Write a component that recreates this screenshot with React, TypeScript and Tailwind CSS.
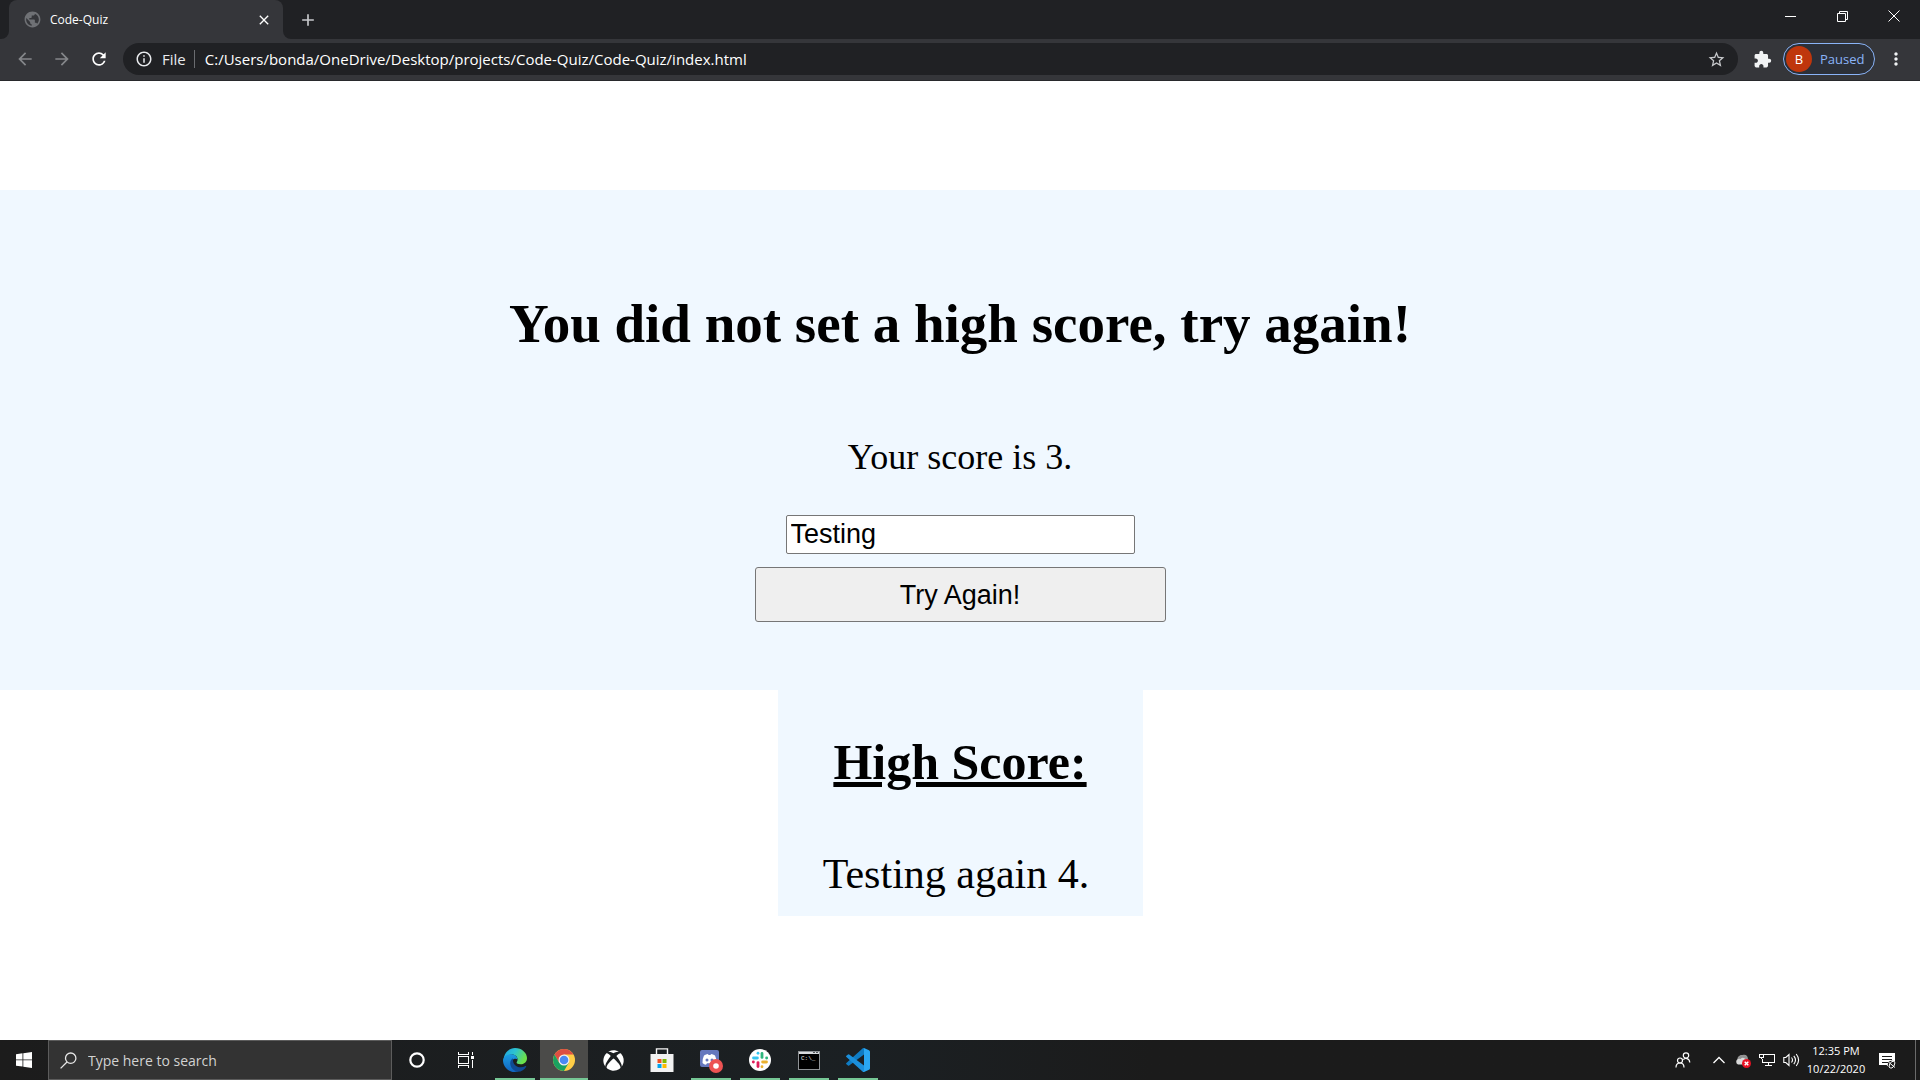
import { useState } from "react";
import type { ReactNode } from "react";
import {
  MdAdd,
  MdArrowBack,
  MdArrowForward,
  MdClose,
  MdExtension,
  MdMoreVert,
  MdOutlineInfo,
  MdPublic,
  MdRefresh,
  MdStarBorder,
} from "react-icons/md";
import { FaXbox } from "react-icons/fa";

function TabStrip() {
  return (
    <div className="flex h-[39px] bg-[#202124]">
      <div className="flex w-[9px] shrink-0 bg-[#35363a]">
        <div className="w-full rounded-br-lg bg-[#202124]" />
      </div>
      <div className="flex w-[274px] shrink-0 items-center rounded-t-lg bg-[#35363a] pl-[14px] pr-[11px]">
        <MdPublic className="size-[19px] text-[#6f7175]" />
        <span className="ml-2 flex-1 text-[12px] leading-4 text-white">Code-Quiz</span>
        <button type="button" aria-label="Close tab" className="text-white">
          <MdClose className="size-4" />
        </button>
      </div>
      <div className="flex min-w-0 flex-1 bg-[#35363a]">
        <div className="flex flex-1 items-center rounded-bl-lg bg-[#202124] pl-[15px]">
          <button type="button" aria-label="New tab" className="text-[#c6c8cb]">
            <MdAdd className="size-5" />
          </button>
        </div>
      </div>
      <div className="flex h-8 bg-[#202124] text-white">
        <button type="button" aria-label="Minimize" className="flex w-[52px] items-center justify-center">
          <svg width="11" height="11" viewBox="0 0 11 11" shapeRendering="crispEdges">
            <path d="M0 5h11" stroke="currentColor" />
          </svg>
        </button>
        <button type="button" aria-label="Restore" className="flex w-[52px] items-center justify-center">
          <svg width="11" height="11" viewBox="0 0 11 11" fill="none" stroke="currentColor">
            <path d="M.5 2.500h8v8h-8zM2.500 2.500v-2h8v8h-2" />
          </svg>
        </button>
        <button type="button" aria-label="Close" className="flex w-[52px] items-center justify-center">
          <svg width="12" height="12" viewBox="0 0 12 12" stroke="currentColor">
            <path d="M.5.5l11 11M11.500.5l-11 11" />
          </svg>
        </button>
      </div>
    </div>
  );
}

function Toolbar() {
  return (
    <div className="flex h-[42px] items-center border-b border-[#28292c] bg-[#35363a] pb-px">
      <div className="flex items-center gap-[17px] pl-[15px]">
        <button type="button" aria-label="Back" className="text-[#85878a]">
          <MdArrowBack className="size-5" />
        </button>
        <button type="button" aria-label="Forward" className="text-[#85878a]">
          <MdArrowForward className="size-5" />
        </button>
        <button type="button" aria-label="Reload" className="text-white">
          <MdRefresh className="size-5" />
        </button>
      </div>
      <div className="ml-[14px] flex h-8 min-w-0 flex-1 items-center rounded-full bg-[#202124] px-3">
        <MdOutlineInfo className="size-[18px] shrink-0 text-[#e8eaed]" />
        <span className="ml-[9px] text-[15px] leading-5 text-[#e8eaed]">File</span>
        <span className="ml-2 h-[18px] w-px bg-[#6a6c70]" />
        <input
          aria-label="Address"
          defaultValue="C:/Users/bonda/OneDrive/Desktop/projects/Code-Quiz/Code-Quiz/index.html"
          className="ml-[10px] min-w-0 flex-1 bg-transparent text-[15px] leading-5 text-white outline-none"
        />
        <button type="button" aria-label="Bookmark this tab" className="text-[#c6c8cb]">
          <MdStarBorder className="size-[19px]" />
        </button>
      </div>
      <button type="button" aria-label="Extensions" className="ml-[15px] text-[#f1f3f4]">
        <MdExtension className="size-[19px]" />
      </button>
      <button
        type="button"
        className="ml-[11px] flex h-8 w-[92px] items-center rounded-full border border-[#8ab4f8] bg-[#2c3038] pl-0.5"
      >
        <span className="flex size-[26px] items-center justify-center rounded-full bg-[#bf360c] text-[13px] leading-4 text-white">
          B
        </span>
        <span className="ml-2 text-[13px] leading-5 text-[#8ab4f8]">Paused</span>
      </button>
      <button type="button" aria-label="Menu" className="ml-[11px] mr-[14px] text-[#f1f3f4]">
        <MdMoreVert className="size-5" />
      </button>
    </div>
  );
}

function QuizPage() {
  const [name, setName] = useState("Testing");
  return (
    <main className="flex flex-1 flex-col items-center bg-white pt-[109px] font-['Liberation_Serif',serif] text-black">
      <section className="flex h-[500px] w-full flex-col items-center bg-[#f0f8ff] pt-[103px]">
        <h1 className="text-[55px] font-bold leading-[62px]">You did not set a high score, try again!</h1>
        <p className="mt-[81px] text-[36px] leading-[42px]">Your score is 3.</p>
        <input
          aria-label="Your name"
          value={name}
          onChange={(e) => setName(e.target.value)}
          className="mt-[37px] h-[39px] w-[349px] rounded-xs border border-[#767676] bg-white px-1 font-['Liberation_Sans',Arial,sans-serif] text-[27px] leading-8 outline-none"
        />
        <button
          type="button"
          className="mt-[13px] h-[55px] w-[411px] rounded-[3px] border border-[#767676] bg-[#efefef] font-['Liberation_Sans',Arial,sans-serif] text-[27px] leading-8"
        >
          Try Again!
        </button>
      </section>
      <section className="flex w-[365px] flex-col items-center bg-[#f0f8ff] pb-[17px] pt-[43px]">
        <h2 className="text-[50px] font-bold leading-[58px] underline decoration-[5px]">High Score:</h2>
        <p className="mr-2 mt-[58px] text-[42px] leading-[50px]">Testing again 4.</p>
      </section>
    </main>
  );
}

function EdgeIcon() {
  return (
    <svg width="24" height="24" viewBox="0 0 24 24">
      <defs>
        <linearGradient id="edgeTop" x1="0" y1="0" x2="1" y2="0.4">
          <stop offset="0" stopColor="#1f9fe0" />
          <stop offset="0.5" stopColor="#2cc3d2" />
          <stop offset="1" stopColor="#6be04a" />
        </linearGradient>
        <linearGradient id="edgeLeft" x1="0" y1="0" x2="0" y2="1">
          <stop offset="0" stopColor="#1b9de2" />
          <stop offset="1" stopColor="#1164c0" />
        </linearGradient>
      </defs>
      <path d="M1 9C2 4 6.500 0 12 0c7 0 12 5 12 10 0 4-3 6.300-6.500 6.300-3 0-4.500-1.200-3.700-2.300C16 11 13.500 6.500 9 6.500 5 6.500 1.500 9 .2 13z" fill="url(#edgeTop)" />
      <path d="M0 12C.8 8.500 4 6 8.500 6.200c3.500.2 6 2.400 6 5.300-1.500-1.800-6.500-.5-6.500 4 0 4 3.500 7 7.500 7.700C8 26 0 20.500 0 12z" fill="url(#edgeLeft)" />
      <path d="M10 10.200c-5 2.800-3.200 11.600 4.500 13.500 4 .1 7-2 8.700-5 .3-.7-.2-1-.7-.7C17 21 9 18.500 10 10.200z" fill="#0f4a94" />
    </svg>
  );
}

function ChromeIcon() {
  return (
    <svg width="22" height="22" viewBox="0 0 22 22">
      <circle cx="11" cy="11" r="11" fill="#ffcd46" />
      <path d="M1.500 5.500A11 11 0 0 1 20.500 5.500H11L6.240 13.750z" fill="#dd4f43" />
      <path d="M1.500 5.500A11 11 0 0 0 11 22l4.760-8.250H6.240z" fill="#1aa160" />
      <circle cx="11" cy="11" r="5.500" fill="#f1f1f1" />
      <circle cx="11" cy="11" r="4.300" fill="#4a89f3" />
    </svg>
  );
}

function StoreIcon() {
  return (
    <svg width="24" height="24" viewBox="0 0 24 24">
      <path d="M6.500 7V.9h11V7" fill="none" stroke="#f5f5f5" strokeWidth="1.400" />
      <path d="M.5 6h23v18H.5z" fill="#f2f2f2" />
      <path d="M7.500 11h4v4h-4z" fill="#f25022" />
      <path d="M12.500 11h4v4h-4z" fill="#7fba00" />
      <path d="M7.500 16h4v4h-4z" fill="#00a4ef" />
      <path d="M12.500 16h4v4h-4z" fill="#ffb900" />
    </svg>
  );
}

function DiscordIcon() {
  return (
    <svg width="28" height="28" viewBox="0 0 28 28" className="overflow-visible">
      <path d="M5 4h15q2 0 2 2v17l-4-2H5q-2 0-2-2V6q0-2 2-2z" fill="#6578be" />
      <path d="M7 9.500q2-1.500 4-1.500l.5 1h2l.5-1q2 0 4 1.500 1.800 3.500 1.500 7.500-1.500 1.500-3.500 1.700l-1-1.400H10l-1 1.400Q7 18.500 5.500 17 5.200 13 7 9.500z" fill="#fff" />
      <circle cx="10" cy="14" r="1.500" fill="#6578be" />
      <circle cx="15" cy="14" r="1.500" fill="#6578be" />
      <circle cx="19" cy="20" r="7" fill="#ed5353" />
      <circle cx="19" cy="20" r="2.800" fill="#fff" />
    </svg>
  );
}

function SlackIcon() {
  return (
    <svg width="22" height="22" viewBox="0 0 22 22">
      <circle cx="11" cy="11" r="11" fill="#fff" />
      <g strokeWidth="2.800" strokeLinecap="round">
        <path d="M4.500 9h3.900" stroke="#36c5f0" />
        <path d="M9 4.200v.1" stroke="#36c5f0" />
        <path d="M13 4.500v3.900" stroke="#2eb67d" />
        <path d="M17.600 9h.1" stroke="#2eb67d" />
        <path d="M13.600 13h3.900" stroke="#ecb22e" />
        <path d="M13 17.700v.1" stroke="#ecb22e" />
        <path d="M9 13.600v3.900" stroke="#e01e5a" />
        <path d="M4.300 13h.1" stroke="#e01e5a" />
      </g>
    </svg>
  );
}

function TerminalIcon() {
  return (
    <svg width="22" height="19" viewBox="0 0 22 19">
      <path d="M0 0h22v19H0z" fill="#8f9396" />
      <path d="M1 1h20v2H1z" fill="#d9dbdd" />
      <path d="M15 1h2v1h-2zM18 1h2v1h-2z" fill="#55585b" />
      <path d="M1 3h20v15H1z" fill="#000" />
      <text x="3" y="9" fill="#e6e6e6" fontSize="6" fontFamily="Liberation Mono, monospace">
        C:\_
      </text>
    </svg>
  );
}

function CodeIcon() {
  return (
    <svg width="24" height="24" viewBox="0 0 24 24">
      <path d="M18 0v6.500L3.200 17.600q-.6.500-1.200 0L.4 16.200q-.7-.7 0-1.300L16.800.2Q17.500-.2 18 0z" fill="#0f7cc4" />
      <path d="M18 24v-6.500L3.200 6.400q-.6-.5-1.200 0L.4 7.800q-.7.7 0 1.300l16.400 14.700q.7.400 1.200.2z" fill="#1b8fdb" />
      <path d="M18 0l5 2.300q1 .5 1 1.500v16.400q0 1-1 1.500L18 24q-1 .2-1.500-.4.500.2 1.500-.6z" fill="#2aa7f2" />
    </svg>
  );
}

type TaskApp = { label: string; icon: ReactNode; running?: boolean; active?: boolean };

const taskApps: TaskApp[] = [
  {
    label: "Cortana",
    icon: (
      <svg width="16" height="16" viewBox="0 0 16 16" fill="none">
        <circle cx="8" cy="8" r="6.700" stroke="#fff" strokeWidth="2.200" />
      </svg>
    ),
  },
  {
    label: "Task View",
    icon: (
      <svg width="18" height="16" viewBox="0 0 18 16" fill="none" stroke="#fff" shapeRendering="crispEdges">
        <path d="M1.500 4.500h10v7h-10zM1.500 0v2.500h10V0M1.500 16v-2.500h10V16M15.500 0v3M15.500 8v8" />
        <path d="M14 4h3v3h-3z" fill="#fff" stroke="none" />
      </svg>
    ),
  },
  { label: "Microsoft Edge", icon: <EdgeIcon />, running: true },
  { label: "Google Chrome", icon: <ChromeIcon />, active: true },
  { label: "Xbox", icon: <FaXbox className="size-[21px] text-white" /> },
  { label: "Microsoft Store", icon: <StoreIcon /> },
  { label: "Discord", icon: <DiscordIcon />, running: true },
  { label: "Slack", icon: <SlackIcon />, running: true },
  { label: "Command Prompt", icon: <TerminalIcon />, running: true },
  { label: "Visual Studio Code", icon: <CodeIcon />, running: true },
];

function TaskButton({ label, icon, running, active }: TaskApp) {
  return (
    <button
      type="button"
      aria-label={label}
      className={
        active
          ? "flex w-12 flex-col items-center bg-[#4b4b49]"
          : "flex w-12 flex-col items-center"
      }
    >
      <span className="flex h-[38px] items-center justify-center pt-0.5">{icon}</span>
      {active && <span className="h-0.5 w-full bg-[#76c795]" />}
      {running && <span className="h-0.5 w-10 bg-[#76c795]" />}
    </button>
  );
}

function TrayIcons() {
  return (
    <div className="flex items-center text-white">
      <button type="button" aria-label="People" className="mr-[22px]">
        <svg width="16" height="16" viewBox="0 0 16 16" fill="none" stroke="currentColor" strokeWidth="1.200">
          <circle cx="5" cy="8.500" r="2.500" />
          <path d="M1 15.500c0-6 8-6 8 0" />
          <circle cx="11" cy="3.500" r="2.700" />
          <path d="M8.300 7.600C10 5.800 14.300 6 14.800 10.500" />
        </svg>
      </button>
      <button type="button" aria-label="Show hidden icons" className="mr-2.5">
        <svg width="12" height="16" viewBox="0 0 12 16" fill="none" stroke="currentColor" strokeWidth="1.300">
          <path d="M.5 11L6 5.500l5.500 5.500" />
        </svg>
      </button>
      <button type="button" aria-label="OneDrive" className="mr-2">
        <svg width="16" height="16" viewBox="0 0 16 16" className="overflow-visible">
          <path d="M2.500 8C2 5 4.500 2.500 7.500 3 11 2 13 4 13 7.500L10 11H4z" fill="#929292" />
          <path d="M3 12.500a3 3 0 0 1 0-5.500q1.200-.7 2.500 0Q8 4.500 11 7.500l1 5z" fill="#dadada" />
          <circle cx="11.500" cy="11.500" r="4.500" fill="#e81123" />
          <path d="M9.700 9.700l3.600 3.600M13.300 9.700l-3.600 3.600" stroke="#fff" strokeWidth="1.400" />
        </svg>
      </button>
      <button type="button" aria-label="Network" className="mr-2">
        <svg width="16" height="16" viewBox="0 0 16 16" fill="none" stroke="currentColor" shapeRendering="crispEdges">
          <path d="M5 2.500h10.500v8h-12V7M9.500 10.500v3M6 13.500h7" />
          <path d="M.5 2.500h4v3h-4zM2.500 5v2" />
        </svg>
      </button>
      <button type="button" aria-label="Volume" className="mr-1.5">
        <svg width="17" height="16" viewBox="0 0 17 16" fill="none" stroke="currentColor" strokeWidth="1.100">
          <path d="M.8 5.500h2L6 2.500v11l-3.200-3h-2z" />
          <path d="M8.500 5.500q2 2.500 0 5M10.800 3.800q3.400 4.200 0 8.400M13.200 2q4.800 6 0 12" />
        </svg>
      </button>
    </div>
  );
}

function Taskbar() {
  return (
    <footer className="flex h-10 bg-linear-to-r from-[#1c1c1c] via-[#1b2023] via-45% to-[#1b1b1b] to-60%">
      <button type="button" aria-label="Start" className="flex w-12 shrink-0 items-center justify-center">
        <svg width="16" height="16" viewBox="0 0 16 16" fill="#fff">
          <path d="M0 2.200L6.500 1.300v6.200H0zM7.300 1.200L16 0v7.500H7.300zM0 8.300h6.500v6.200L0 13.700zM7.300 8.300H16V16l-8.700-1.200z" />
        </svg>
      </button>
      <label className="mr-px flex w-[344px] shrink-0 items-center border border-[#5c5c5c] bg-[#333333] pl-[11px]">
        <svg width="17" height="17" viewBox="0 0 17 17" fill="none" stroke="#e6e6e6" strokeWidth="1.300">
          <circle cx="10.700" cy="6.200" r="5.200" />
          <path d="M7 10L.6 16.400" />
        </svg>
        <input
          type="text"
          aria-label="Search"
          placeholder="Type here to search"
          className="ml-[11px] min-w-0 flex-1 bg-transparent pt-px text-[14px] leading-5 text-white outline-none placeholder:text-[#d2d2d2]"
        />
      </label>
      <nav aria-label="Applications" className="flex gap-px">
        {taskApps.map((app) => (
          <TaskButton key={app.label} {...app} />
        ))}
      </nav>
      <div className="ml-auto flex items-center">
        <TrayIcons />
        <div className="flex w-[60px] flex-col items-center text-[11px] leading-[18px] text-white">
          <time>12:35 PM</time>
          <time>10/22/2020</time>
        </div>
        <button type="button" aria-label="Notifications" className="ml-[13px]">
          <svg width="17" height="17" viewBox="0 0 17 17">
            <path d="M0 1h16v12h-5v3l-3.500-3H0z" fill="#fff" />
            <path d="M3 4.500h10M3 7.500h10M3 10.500h6" stroke="#1b1b1b" />
            <circle cx="12.800" cy="12.800" r="4" fill="#1b1b1b" />
            <path d="M10 15q0-4 3-5.500 2-.5 3 1-.5 4-3 5.500-2 .3-3-1zM10 10.500l6 5" fill="none" stroke="#fff" />
          </svg>
        </button>
        <span className="ml-[19px] mr-1 h-10 w-px bg-[#6b6b6b]" />
      </div>
    </footer>
  );
}

export default function App() {
  return (
    <div className="flex min-h-screen flex-col font-['Open_Sans','Noto_Sans',sans-serif]">
      <header>
        <TabStrip />
        <Toolbar />
      </header>
      <QuizPage />
      <Taskbar />
    </div>
  );
}
